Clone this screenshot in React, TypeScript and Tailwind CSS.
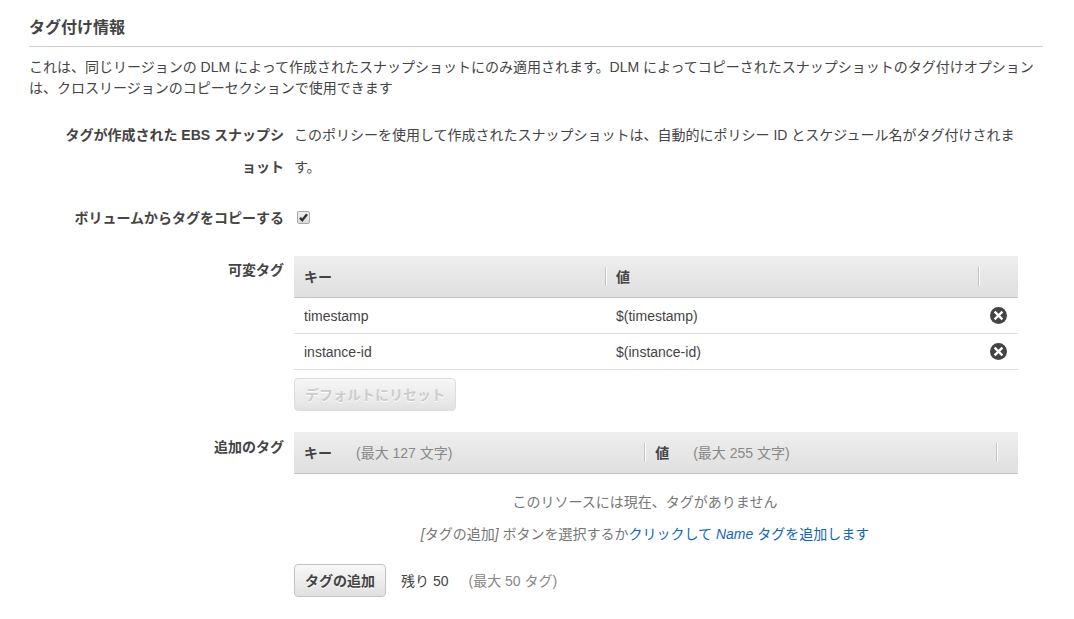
import { useState } from "react"

import type { PropsWithChildren, ReactNode } from "react"

type FormRowProps = {
  label: ReactNode
  className?: string
}

type HeaderCellProps = {
  title: string
  hint?: string
  className?: string
}

const variableTags = [
  { key: "timestamp", value: "$(timestamp)" },
  { key: "instance-id", value: "$(instance-id)" },
]

function FormRow({ label, className = "", children }: PropsWithChildren<FormRowProps>) {
  return (
    <div className={`grid grid-cols-[255px_minmax(0,1fr)] gap-x-[10px] leading-8 ${className}`}>
      <div className="pl-[35px] text-right font-bold [line-break:loose]">{label}</div>
      <div>{children}</div>
    </div>
  )
}

function HeaderCell({ title, hint, className = "" }: HeaderCellProps) {
  return (
    <th scope="col" className={`border-b border-[#c4c4c4] p-0 text-left font-bold ${className}`}>
      <div className="flex h-[19px] items-center gap-6 border-r border-[#c4c4c4] px-[10px] shadow-[1px_0_0_#fff]">
        <span>{title}</span>
        {hint && <span className="font-normal text-[#888]">{hint}</span>}
      </div>
    </th>
  )
}

function RemoveIcon() {
  return (
    <svg viewBox="0 0 17 17" className="size-[17px]" aria-hidden="true">
      <circle cx="8.5" cy="8.5" r="8.5" fill="#444" />
      <path d="M4.6 4.6l7.8 7.8M12.4 4.6l-7.8 7.8" stroke="#fff" strokeWidth="2.3" fill="none" />
    </svg>
  )
}

export default function App() {
  const [copyTags, setCopyTags] = useState(true)

  return (
    <main className="pt-4 pr-[31px] pb-5 pl-[29px] font-['Liberation_Sans','Noto_Sans_CJK_JP',sans-serif] text-sm text-[#444]">
      <h1 className="border-b border-[#ccc] pb-[6px] text-base leading-6 font-bold">タグ付け情報</h1>
      <p className="pt-[10px] leading-[21px]">
        これは、同じリージョンの DLM によって作成されたスナップショットにのみ適用されます。DLM
        によってコピーされたスナップショットのタグ付けオプションは、クロスリージョンのコピーセクションで使用できます
      </p>

      <div className="pt-5 pr-[25px]">
        <FormRow label="タグが作成された EBS スナップショット">
          <p>
            このポリシーを使用して作成されたスナップショットは、自動的にポリシー ID とスケジュール名がタグ付けされます。
          </p>
        </FormRow>

        <FormRow className="mt-[19px]" label={<label htmlFor="copy-tags">ボリュームからタグをコピーする</label>}>
          <div className="grid h-[30px] w-[19px] place-items-center">
            <input
              id="copy-tags"
              type="checkbox"
              checked={copyTags}
              onChange={(e) => setCopyTags(e.target.checked)}
              className="peer col-start-1 row-start-1 size-[13px] appearance-none rounded-[2px] border border-[#a8a8a8] bg-linear-to-b from-[#eee] to-[#ddd]"
            />
            <svg
              viewBox="0 0 13 13"
              className="pointer-events-none invisible col-start-1 row-start-1 size-[13px] peer-checked:visible"
              aria-hidden="true"
            >
              <path d="M3 6.8L5.3 9.2L10 3.2" stroke="#333" strokeWidth="2.4" fill="none" />
            </svg>
          </div>
        </FormRow>

        <FormRow className="mt-5" label="可変タグ">
          <table className="mt-[2px] w-full table-fixed border-separate border-spacing-0 leading-5">
            <thead>
              <tr className="h-[42px] bg-linear-to-b from-[#eee] to-[#dfdfdf]">
                <HeaderCell className="w-[43.1%]" title="キー" />
                <HeaderCell title="値" />
                <th className="w-[39px] border-b border-[#c4c4c4] p-0" />
              </tr>
            </thead>
            <tbody>
              {variableTags.map((tag) => (
                <tr className="h-9" key={tag.key}>
                  <td className="border-b border-[#ddd] px-[10px] py-0">{tag.key}</td>
                  <td className="border-b border-[#ddd] px-[10px] py-0">{tag.value}</td>
                  <td className="border-b border-[#ddd] p-0 pr-[11px]">
                    <button type="button" className="ml-auto block" aria-label={`${tag.key} を削除`}>
                      <RemoveIcon />
                    </button>
                  </td>
                </tr>
              ))}
            </tbody>
          </table>
          <button
            type="button"
            disabled
            className="mt-2 block h-[33px] rounded-[4px] border border-[#ddd] bg-linear-to-b from-[#f7f7f7] to-[#e2e2e2] px-[10px] leading-5 font-bold text-[#ccc] text-shadow-[0_1px_0_#fff]"
          >
            デフォルトにリセット
          </button>
        </FormRow>

        <FormRow className="mt-5" label="追加のタグ">
          <table className="mt-px w-full table-fixed border-separate border-spacing-0 leading-5">
            <thead>
              <tr className="h-[42px] bg-linear-to-b from-[#eee] to-[#dfdfdf]">
                <HeaderCell className="w-[48.5%]" title="キー" hint="(最大 127 文字)" />
                <HeaderCell title="値" hint="(最大 255 文字)" />
                <th className="w-[21px] border-b border-[#c4c4c4] p-0" />
              </tr>
            </thead>
          </table>
          <div className="pt-3 pr-[22px] pb-[14px] text-center text-[#777]">
            <p>このリソースには現在、タグがありません</p>
            <p className="italic [font-synthesis-style:none]">
              [タグの追加] ボタンを選択するか
              <a href="#" className="text-[#1166bb]">
                クリックして Name タグを追加します
              </a>
            </p>
          </div>
          <div className="flex items-center">
            <button
              type="button"
              className="h-[33px] rounded-[4px] border border-[#c4c4c4] bg-linear-to-b from-[#f8f8f8] to-[#e0e0e0] px-[10px] leading-5 font-bold text-shadow-[0_1px_0_#fff]"
            >
              タグの追加
            </button>
            <span className="ml-[15px]">残り 50</span>
            <span className="ml-5 text-[#888]">(最大 50 タグ)</span>
          </div>
        </FormRow>
      </div>
    </main>
  )
}
